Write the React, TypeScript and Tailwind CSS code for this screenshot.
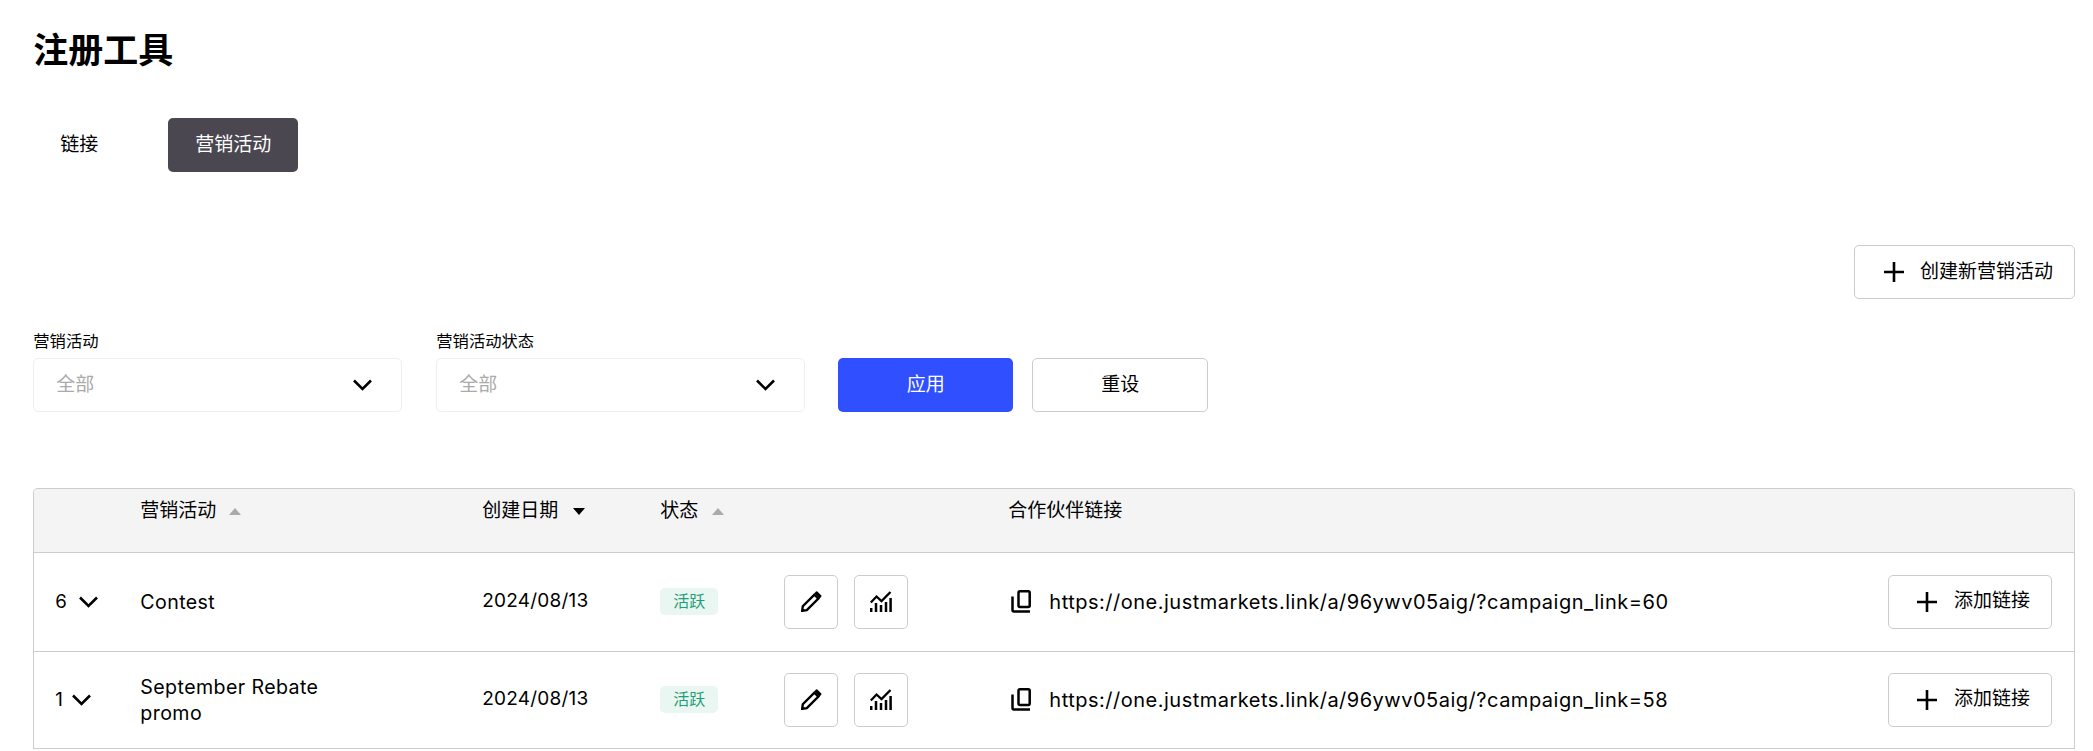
import React from "react";

const Plus = () => (
  <svg width="20" height="20" viewBox="0 0 20 20" fill="none" stroke="#000" strokeWidth="2.6">
    <path d="M10 0v20M0 10h20" />
  </svg>
);

const Chevron = () => (
  <svg width="19" height="12" viewBox="0 0 19 12" fill="none" stroke="#000" strokeWidth="2.6">
    <path d="M1 1.500l8.500 8.500L18 1.500" />
  </svg>
);

const Pencil = () => (
  <svg width="21" height="21" viewBox="0 0 21 21" fill="none" stroke="#000" strokeWidth="2.4">
    <path d="M1.200 19.800l.6-4.600L13.400 3.600l4 4L5.800 19.200z" />
    <path d="M13.400 2.200L15 .6l1-.4 4.600 4.600-.4 1-1.600 1.600z" fill="#000" stroke="none" />
  </svg>
);

const Chart = () => (
  <svg width="22" height="21" viewBox="0 0 22 21" fill="none" stroke="#000">
    <path d="M.8 11.500L6.500 5.500l5 4.600L20.500 1" strokeWidth="2.300" />
    <path d="M1.200 17v4M6 12v9M11 14v7M16 11v10M20.600 7v14" strokeWidth="2.500" />
  </svg>
);

const Copy = () => (
  <svg width="20" height="23" viewBox="0 0 20 23" fill="none" stroke="#000" strokeWidth="2.500">
    <rect x="7.500" y="1.300" width="11.200" height="15.700" rx="1.500" />
    <path d="M1.500 6.500V20a1.500 1.500 0 0 0 1.500 1.500H19" />
  </svg>
);

const SortArrow = ({ up, active }: { up?: boolean; active?: boolean }) => (
  <svg width="12" height="7" viewBox="0 0 12 7" fill={active ? "#000" : "#aaa"}>
    <path d={up ? "M6 0l6 7H0z" : "M6 7L0 0h12z"} />
  </svg>
);

const FilterSelect = ({ label }: { label: string }) => (
  <div className="w-[369px]">
    <div className="text-[16.3px] leading-[22px] mb-[6px]">{label}</div>
    <div className="h-[54px] flex items-center justify-between pl-[22px] pr-[29px] border border-[#eeeeee] rounded-[5px]">
      <span className="text-[#aaaaaa] text-[19px]">全部</span>
      <Chevron />
    </div>
  </div>
);

const IconButton = ({ children }: { children: React.ReactNode }) => (
  <button className="w-[54px] h-[54px] flex items-center justify-center border border-[#cccccc] rounded-[5px] bg-white">
    {children}
  </button>
);

type Campaign = {
  count: number;
  name: string;
  date: string;
  link: string;
  rowClass: string;
  gap: string;
};

const campaigns: Campaign[] = [
  {
    count: 6,
    name: "Contest",
    date: "2024/08/13",
    link: "https://one.justmarkets.link/a/96ywv05aig/?campaign_link=60",
    rowClass: "h-[99px]",
    gap: "gap-[12px]",
  },
  {
    count: 1,
    name: "September Rebate promo",
    date: "2024/08/13",
    link: "https://one.justmarkets.link/a/96ywv05aig/?campaign_link=58",
    rowClass: "h-[97px]",
    gap: "gap-[9px]",
  },
];

export default function App() {
  return (
    <div className="h-[751px] overflow-hidden bg-white text-black pl-[33.33px] pr-[18px] pt-[25px] text-[19px] font-[Inter,'Noto_Sans_CJK_SC',sans-serif]">
      <h1 className="text-[35px] leading-[50px] font-bold">注册工具</h1>

      <div className="flex gap-[43px] mt-[43px]">
        <button className="h-[54px] px-[27px]">链接</button>
        <button className="h-[54px] px-[27px] bg-[#4a4751] text-white rounded-[5px]">营销活动</button>
      </div>

      <div className="flex justify-end mt-[73px]">
        <button className="h-[54px] w-[221px] flex items-center gap-[16px] pl-[29px] border border-[#cccccc] rounded-[5px]">
          <Plus />
          <span>创建新营销活动</span>
        </button>
      </div>

      <div className="flex items-end mt-[31px]">
        <div className="flex gap-[34px]">
          <FilterSelect label="营销活动" />
          <FilterSelect label="营销活动状态" />
        </div>
        <button className="ml-[33px] w-[175px] h-[54px] bg-[#304ffe] text-white rounded-[5px]">应用</button>
        <button className="ml-[19px] w-[176px] h-[54px] border border-[#cccccc] rounded-[5px]">重设</button>
      </div>

      <div className="mt-[76px] border-x border-t border-[#cccccc] rounded-t-[5px] overflow-hidden">
        <table className="w-full table-fixed border-collapse">
          <colgroup>
            <col className="w-[106px]" />
            <col className="w-[342px]" />
            <col className="w-[178px]" />
            <col className="w-[124px]" />
            <col className="w-[224px]" />
            <col />
            <col className="w-[186px]" />
          </colgroup>
          <thead>
            <tr className="h-[63px] bg-[#f4f4f4] border-b border-[#cccccc] text-left align-top">
              <th />
              <th className="font-normal pt-[9px] leading-[26px]">
                <span className="inline-flex items-center gap-[13px]">
                  营销活动
                  <SortArrow up />
                </span>
              </th>
              <th className="font-normal pt-[9px] leading-[26px]">
                <span className="inline-flex items-center gap-[15px]">
                  创建日期
                  <SortArrow active />
                </span>
              </th>
              <th className="font-normal pt-[9px] leading-[26px]" colSpan={2}>
                <span className="inline-flex items-center gap-[14px]">
                  状态
                  <SortArrow up />
                </span>
              </th>
              <th className="font-normal pt-[9px] leading-[26px]" colSpan={2}>
                合作伙伴链接
              </th>
            </tr>
          </thead>
          <tbody>
            {campaigns.map((c) => (
              <tr key={c.link} className={`${c.rowClass} border-b border-[#cccccc]`}>
                <td className="pl-[21px]">
                  <div className={`flex items-center ${c.gap} text-[18.67px]`}>
                    <span>{c.count}</span>
                    <Chevron />
                  </div>
                </td>
                <td>
                  <div className="max-w-[200px] text-[19.6px] tracking-[0.4px] leading-[26px]">{c.name}</div>
                </td>
                <td className="tracking-[0.2px]">{c.date}</td>
                <td>
                  <span className="inline-flex h-[27px] items-center px-[13px] rounded-[5px] bg-[#e9f6f2] text-[#1f9e78] text-[16px]">
                    活跃
                  </span>
                </td>
                <td>
                  <div className="flex gap-[16px]">
                    <IconButton>
                      <Pencil />
                    </IconButton>
                    <IconButton>
                      <Chart />
                    </IconButton>
                  </div>
                </td>
                <td>
                  <div className="flex items-center gap-[18px] pl-[3px]">
                    <Copy />
                    <span className="whitespace-nowrap text-[20px] tracking-[0.5px]">{c.link}</span>
                  </div>
                </td>
                <td>
                  <button className="w-[164px] h-[54px] flex items-center gap-[17px] pl-[28px] border border-[#cccccc] rounded-[5px]">
                    <Plus />
                    <span>添加链接</span>
                  </button>
                </td>
              </tr>
            ))}
          </tbody>
        </table>
      </div>
    </div>
  );
}
